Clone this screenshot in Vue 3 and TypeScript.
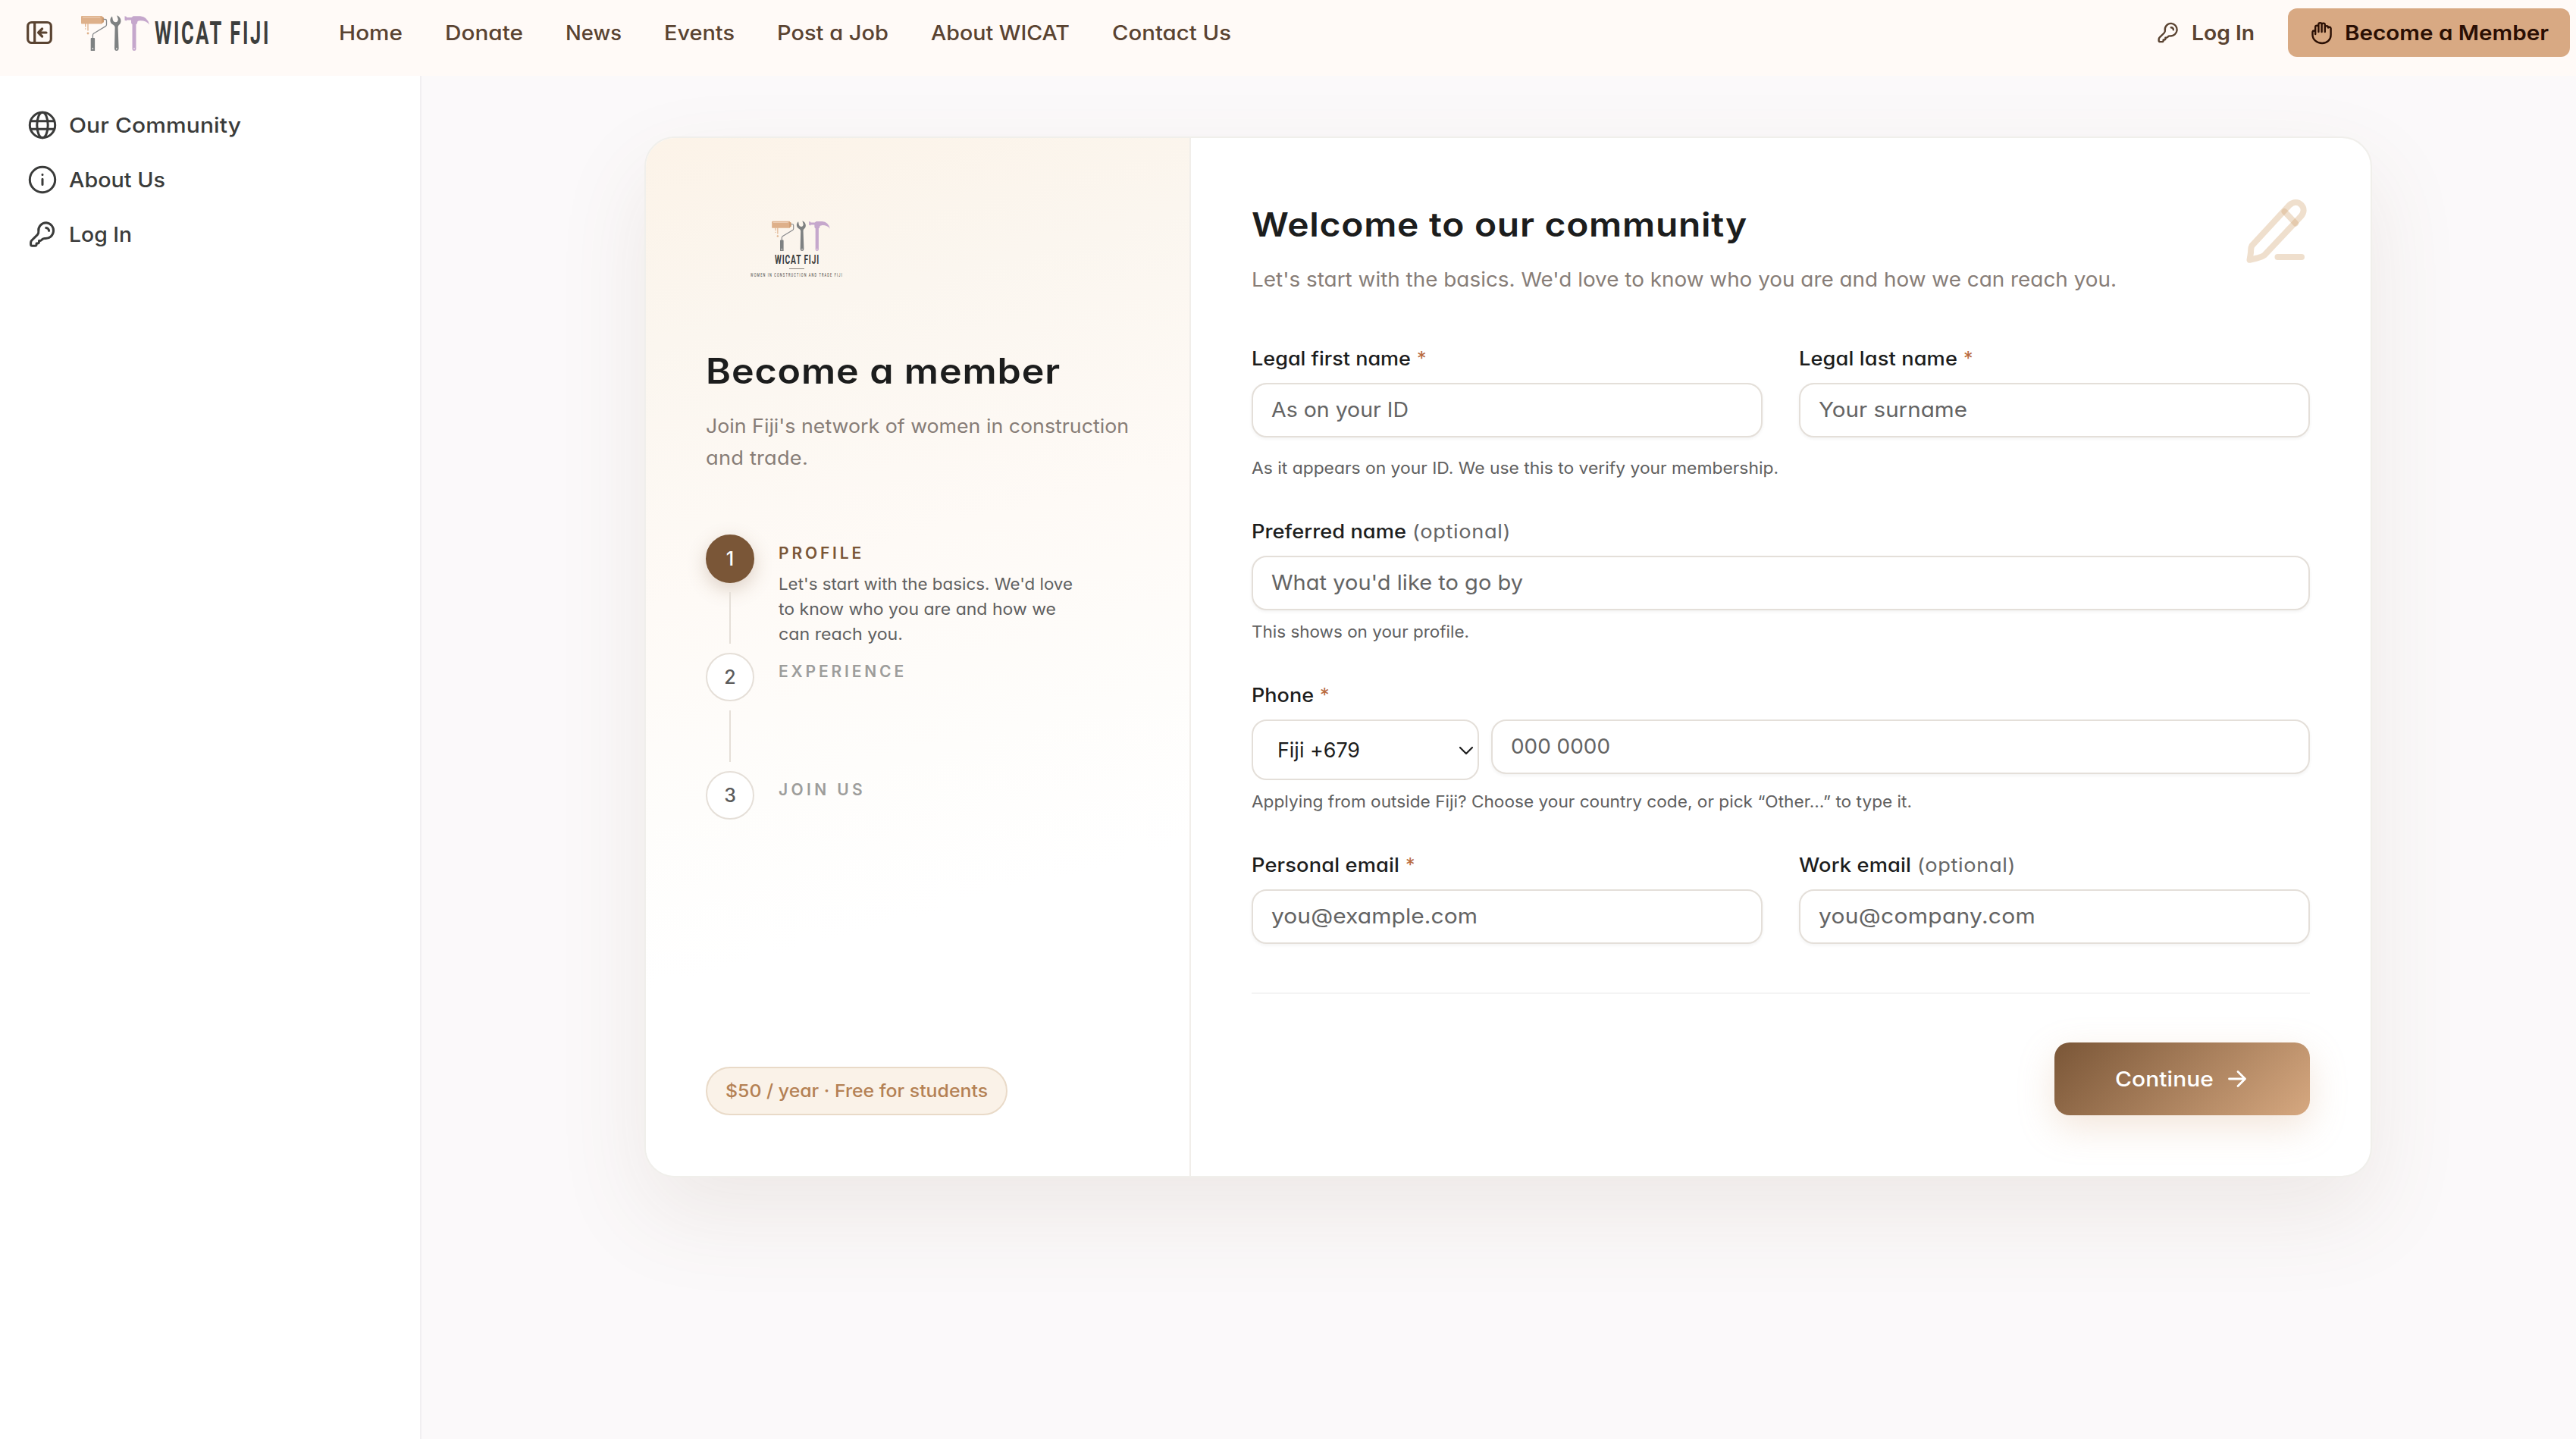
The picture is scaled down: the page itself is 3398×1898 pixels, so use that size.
<script setup lang="ts">
import type { Directive } from 'vue'

interface Line {
  text: string
  width: number
}

// Makes a line of text occupy the given width: the glyphs are widened up to
// a limit, and any remainder goes into tracking. "narrow" condenses the
// glyphs for the wordmark, "track" leaves them as they are.
const MAX_STRETCH = 1.09
const FIXED: Record<string, number> = { narrow: 0.6, track: 1 }

const vFit: Directive<HTMLElement, number> = {
  mounted(el, binding) {
    const target = binding.value
    const count = (el.textContent ?? '').length
    const natural = el.getBoundingClientRect().width
    const stretch = binding.arg ? FIXED[binding.arg] : Math.min(MAX_STRETCH, target / natural)
    const layout = target / stretch
    el.style.letterSpacing = `${(layout - natural) / count}px`
    el.style.transform = `scaleX(${stretch})`
    el.style.marginRight = `${target - layout}px`
  },
}

const nav: Line[] = [
  { text: 'Home', width: 84 },
  { text: 'Donate', width: 103 },
  { text: 'News', width: 74 },
  { text: 'Events', width: 93 },
  { text: 'Post a Job', width: 147 },
  { text: 'About WICAT', width: 183 },
  { text: 'Contact Us', width: 157 },
]

const side = [
  { icon: 'globe', text: 'Our Community', width: 227 },
  { icon: 'info', text: 'About Us', width: 127 },
  { icon: 'key', text: 'Log In', width: 83 },
]

const steps: { title: Line; lines: Line[] }[] = [
  {
    title: { text: 'PROFILE', width: 113 },
    lines: [
      { text: "Let's start with the basics. We'd love", width: 388 },
      { text: 'to know who you are and how we', width: 366 },
      { text: 'can reach you.', width: 164 },
    ],
  },
  { title: { text: 'EXPERIENCE', width: 169 }, lines: [] },
  { title: { text: 'JOIN US', width: 115 }, lines: [] },
]
</script>

<template>
  <svg class="defs" width="0" height="0" aria-hidden="true">
    <symbol id="tools" viewBox="0 0 90 47">
      <rect x="0" y="1" width="28" height="10.6" rx="1" fill="#deb08a" />
      <path d="M27 1.5l3 1.7v6l-3 1.8z" fill="#cf9d73" />
      <path d="M2 2.8h23" stroke="#ecd0b8" stroke-width="1.2" />
      <path d="M5.7 11v4.5M9 11v9.5" stroke="#deb08a" stroke-width="1.3" />
      <circle cx="5.7" cy="18" r=".8" fill="#deb08a" />
      <circle cx="9" cy="24" r="1.4" fill="#deb08a" />
      <path d="M29.5 5.5h2.2q1.8 0 1.8 1.8v5.2q0 1.4-1.2 2.1L16.8 24q-1.4 1-1.4 2.4V31" fill="none" stroke="#85878a" stroke-width="1.3" />
      <path fill-rule="evenodd" d="M12.7 31q0-1 1-1h3.4q1 0 1 1v16h-5.4zM14.6 43.5v1.6h1.5v-1.6z" fill="#7e8182" />
      <path fill-rule="evenodd" d="M41 1.6C37.3 4.2 37.4 10.4 42 12.6q2.600 1.200 2.600 3.500L44 44q.2 3 2.800 3t2.800-3l-1-28q0-2.200 1.800-3.600C54 9.400 53 2.500 47.200.2L48.800 5.600q-.3 3.500-3.200 3.700-3.300-.2-3.800-3.200zM46.100 43.600h1.400v1.600h-1.400z" fill="#7e8182" />
      <path fill-rule="evenodd" d="M57.500 1.300l2.500.7v1h6.500l2.200-1.700H78Q87.500 2 90 12.500 86 6.900 77.500 7.200q-3.300 0-3.300 2.300 0 2-1.700 2.500V45q-.2 2-2.500 2t-2.500-2V12Q66 11.500 66 9.500V6.500h-6v1l-2.500-.7zM69.300 43.500h1.400v1.600h-1.400z" fill="#c5a7cc" />
    </symbol>
    <symbol id="key" viewBox="0 0 40 40">
      <path d="M25 4.800a10.200 10.200 0 0 0-10.200 11.600c.2 1.700-.2 3-1.400 4.200L5.900 28A4.200 4.200 0 0 0 4.600 31v2.200c0 1.100.9 2 2 2h3.600c1.100 0 1.900-.9 1.900-2v-1.300h1.500c1 0 1.900-.8 1.900-1.900v-1.600h1.700c.5 0 1-.2 1.400-.6l1.200-1.200c.9-.9 2.100-1.200 3.600-1.100A10.200 10.200 0 1 0 25 4.800z" />
      <path d="M24.800 11.500a4 4 0 0 1 3.800 3.900" />
    </symbol>
    <symbol id="globe" viewBox="0 0 40 40">
      <circle cx="20" cy="20" r="16.700" />
      <ellipse cx="20" cy="20" rx="7.200" ry="16.700" />
      <path d="M4.500 14.700h31M4.500 25.300h31" />
    </symbol>
    <symbol id="info" viewBox="0 0 40 40">
      <circle cx="20" cy="20" r="16.700" />
      <path d="M20 19.200v7.400M20 13.200v.4" />
    </symbol>
  </svg>

  <div class="page">
    <header class="topbar">
      <svg class="toggle" viewBox="0 0 40 40">
        <rect x="4.700" y="6.500" width="30.600" height="27" rx="5" />
        <path d="M13.700 6.500v27M29 20H19M23.600 15l-5 5 5 5" />
      </svg>
      <div class="brand">
        <svg><use href="#tools" /></svg>
        <span v-fit:narrow="153">WICAT FIJI</span>
      </div>
      <nav class="nav">
        <a v-for="item in nav" :key="item.text" v-fit="item.width">{{ item.text }}</a>
      </nav>
      <a class="login">
        <svg><use href="#key" /></svg>
        <span v-fit="83">Log In</span>
      </a>
      <a class="join">
        <svg viewBox="0 0 32 32">
          <path d="M8.200 18V8.700a2.100 2.100 0 0 1 4.200 0V15M12.400 15V5.200a2.100 2.100 0 0 1 4.200 0V15M16.600 15V5.700a2.100 2.100 0 0 1 4.200 0V15M20.800 15V9.200a2.100 2.100 0 0 1 4.200 0M25 9.500a2 2 0 0 1 3.600 1v8.600c0 6.400-4.900 10.900-11.500 10.900S4.500 25.200 4.500 19v-4a1.900 1.900 0 0 1 3.700 0" />
        </svg>
        <span v-fit="269">Become a Member</span>
      </a>
    </header>

    <div class="body">
      <aside class="sidebar">
        <a v-for="item in side" :key="item.text">
          <svg><use :href="'#' + item.icon" /></svg>
          <span v-fit="item.width">{{ item.text }}</span>
        </a>
      </aside>

      <main class="main">
        <section class="card">
          <div class="intro">
            <div class="crest">
              <svg class="crest-tools"><use href="#tools" /></svg>
              <span v-fit:narrow="59" class="crest-name">WICAT FIJI</span>
              <i></i>
              <span v-fit:narrow="122" class="crest-tag">WOMEN IN CONSTRUCTION AND TRADE FIJI</span>
            </div>
            <h2><span v-fit="468">Become a member</span></h2>
            <p class="lead">
              <span v-fit="558">Join Fiji's network of women in construction</span>
              <span v-fit="135">and trade.</span>
            </p>
            <ol class="steps">
              <li v-for="(step, i) in steps" :key="i" :class="{ active: i === 0 }">
                <div class="rail">
                  <b>{{ i + 1 }}</b>
                  <i v-if="i < steps.length - 1"></i>
                </div>
                <div class="step-text">
                  <h3><span v-fit:track="step.title.width">{{ step.title.text }}</span></h3>
                  <p v-if="step.lines.length">
                    <span v-for="line in step.lines" :key="line.text" v-fit="line.width">{{ line.text }}</span>
                  </p>
                </div>
              </li>
            </ol>
            <div class="pill"><span v-fit="346">$50 / year · Free for students</span></div>
          </div>

          <form class="form">
            <div class="head">
              <div>
                <h1><span v-fit="654">Welcome to our community</span></h1>
                <p><span v-fit="1141">Let's start with the basics. We'd love to know who you are and how we can reach you.</span></p>
              </div>
              <svg class="pencil" viewBox="0 0 96 96">
                <path d="M19.500 66L62 20l7-7.500c5.500-5 11.500-4.500 15.500-.5s4.500 10-.5 15.500L76.500 35.500 36 78.500c-3 2.500-6 3-10 4l-9.500 2.300 1.500-9.500c.3-3.500-.3-6 1.500-9.300z" />
                <path d="M62.500 21l14.500 15.500" />
                <path d="M53.500 81h31.500" />
              </svg>
            </div>

            <div class="field">
              <div class="pair">
                <div>
                  <label><span v-fit="210">Legal first name</span><em>*</em></label>
                  <div class="input"><span v-fit="181">As on your ID</span></div>
                </div>
                <div>
                  <label><span v-fit="209">Legal last name</span><em>*</em></label>
                  <div class="input"><span v-fit="196">Your surname</span></div>
                </div>
              </div>
              <p class="hint far"><span v-fit="695">As it appears on your ID. We use this to verify your membership.</span></p>
            </div>

            <div class="field">
              <label><span v-fit="204">Preferred name</span><small v-fit="130">(optional)</small></label>
              <div class="input"><span v-fit="332">What you'd like to go by</span></div>
              <p class="hint"><span v-fit="287">This shows on your profile.</span></p>
            </div>

            <div class="field">
              <label><span v-fit="82">Phone</span><em>*</em></label>
              <div class="phone">
                <div class="select">
                  <span v-fit="109">Fiji +679</span>
                  <svg viewBox="0 0 20 12"><path d="M2 2l8 8 8-8" /></svg>
                </div>
                <div class="input"><span v-fit="131">000 0000</span></div>
              </div>
              <p class="hint"><span v-fit="871">Applying from outside Fiji? Choose your country code, or pick “Other…” to type it.</span></p>
            </div>

            <div class="pair">
              <div>
                <label><span v-fit="195">Personal email</span><em>*</em></label>
                <div class="input"><span v-fit="272">you@example.com</span></div>
              </div>
              <div>
                <label><span v-fit="148">Work email</span><small v-fit="130">(optional)</small></label>
                <div class="input"><span v-fit="286">you@company.com</span></div>
              </div>
            </div>

            <div class="actions">
              <button type="button">
                <span v-fit="130">Continue</span>
                <svg viewBox="0 0 28 28"><path d="M3.500 14h21M15 4.500l9.500 9.500-9.500 9.500" /></svg>
              </button>
            </div>
          </form>
        </section>
      </main>
    </div>
  </div>
</template>

<style>
body {
  margin: 0;
  overflow: hidden;
}
</style>

<style scoped>
.defs {
  position: absolute;
}
.page {
  width: 3398px;
  height: 1898px;
  display: flex;
  flex-direction: column;
  font-family: Inter, 'Noto Sans', sans-serif;
  font-feature-settings: 'cv11', 'calt' 0;
  font-size: 27.500px;
  color: #1c1d1d;
  background: #fbf9fa;
}
.page * {
  box-sizing: border-box;
}
h1, h2, h3, p, ol {
  margin: 0;
  padding: 0;
}
span, small, .nav a {
  display: inline-block;
  white-space: nowrap;
  transform-origin: left center;
}
svg {
  fill: none;
  stroke: currentColor;
  stroke-linecap: round;
  stroke-linejoin: round;
  flex: none;
}
symbol#tools, symbol#tools * {
  stroke-linecap: butt;
}
symbol#tools > [fill]:not([stroke]) {
  stroke: none;
}

.topbar {
  height: 100px;
  padding: 0 8px 14px 32px;
  display: flex;
  align-items: center;
  background: #fffaf7;
  color: #5a4331;
}
.toggle {
  width: 40px;
  height: 40px;
  stroke-width: 3.200;
}
.brand {
  width: 248px;
  height: 47px;
  margin-left: 35px;
  display: flex;
  align-items: center;
  gap: 7px;
}
.brand svg {
  width: 90px;
  height: 47px;
}
.brand span {
  font-family: Roboto, sans-serif;
  font-size: 42.500px;
  font-weight: 700;
  line-height: 47px;
  color: #3d3e3d;
}
.nav {
  display: flex;
  gap: 56px;
  margin-left: 92px;
  padding-bottom: 1px;
  font-weight: 500;
  line-height: 42px;
}
.login, .join {
  display: flex;
  align-items: center;
  font-weight: 600;
}
.login {
  margin-left: auto;
}
.login svg {
  width: 32px;
  height: 32px;
  stroke-width: 3;
  margin-right: 15px;
}
.join {
  width: 372px;
  height: 64px;
  margin-left: 44px;
  padding-left: 28px;
  border-radius: 12px;
  background: #d8a983;
  color: #2a0f04;
}
.join svg {
  width: 32px;
  height: 32px;
  stroke-width: 2.400;
  margin-right: 15px;
}

.body {
  flex: 1;
  display: flex;
}
.sidebar {
  width: 556px;
  padding: 29px 0 0 36px;
  border-right: 2px solid #f1eff1;
  background: #fff;
  color: #3a3b3a;
}
.sidebar a {
  height: 72px;
  display: flex;
  align-items: center;
  gap: 15px;
  font-weight: 500;
}
.sidebar svg {
  width: 40px;
  height: 40px;
  stroke-width: 3;
}
.main {
  flex: 1;
  padding: 80px 0 0 294px;
}

.card {
  width: 2279px;
  height: 1373px;
  display: flex;
  border: 2px solid #f0efeb;
  border-radius: 40px;
  background: #fff;
  background-clip: padding-box;
  box-shadow: 0 48px 120px rgba(122, 86, 56, 0.1);
}
.intro {
  width: 719px;
  padding: 80px 78px 80px 79px;
  display: flex;
  flex-direction: column;
  border-right: 2px solid #f1eeea;
  border-radius: 38px 0 0 38px;
  background: linear-gradient(165deg, #fcf3e8 0%, #fbf6ef 18%, #fefaf6 40%, #fefdfb 58%, #fff 72%);
}
.crest {
  width: 240px;
  height: 160px;
  padding-top: 29px;
  display: flex;
  flex-direction: column;
  align-items: center;
  font-family: Roboto, sans-serif;
  color: #3d3e3d;
}
.crest-tools {
  width: 77px;
  height: 40px;
  margin-left: 11px;
}
.crest-name {
  margin-top: 3px;
  font-size: 17px;
  font-weight: 700;
  line-height: 16px;
}
.crest i {
  width: 20px;
  height: 1px;
  margin-top: 4px;
  background: #8b8680;
}
.crest-tag {
  margin-top: 4px;
  font-size: 6.500px;
  line-height: 9px;
}
h2 {
  margin-top: 37px;
  font-size: 46px;
  font-weight: 600;
  line-height: 60px;
}
.lead {
  margin-top: 22px;
  display: flex;
  flex-direction: column;
  align-items: flex-start;
  font-size: 25px;
  line-height: 42px;
  color: #877d77;
}
.steps {
  margin-top: 80px;
  list-style: none;
}
.steps li {
  height: 156px;
  display: flex;
  gap: 32px;
}
.rail {
  width: 64px;
  display: flex;
  flex-direction: column;
  align-items: center;
  gap: 12px;
}
.rail b {
  width: 64px;
  height: 64px;
  border: 2px solid #e5dfd8;
  border-radius: 50%;
  background: #fff;
  font-size: 25px;
  font-weight: 500;
  line-height: 60px;
  text-align: center;
  color: #5b5b5b;
}
.active .rail b {
  border-color: #7a5637;
  background: #7a5637;
  color: #fff;
  box-shadow: 0 8px 24px rgba(122, 86, 55, 0.25);
}
.rail i {
  width: 2px;
  height: 68px;
  background: #e5dfd8;
}
.step-text {
  padding-top: 9px;
}
h3 {
  font-size: 21px;
  font-weight: 600;
  line-height: 32px;
  color: #9d9d9b;
}
.active h3 {
  color: #7a5637;
}
.step-text p {
  margin-top: 8px;
  display: flex;
  flex-direction: column;
  align-items: flex-start;
  font-size: 21.500px;
  line-height: 33px;
  color: #606060;
}
.pill {
  width: 398px;
  height: 64px;
  margin-top: auto;
  padding-left: 24px;
  border: 2px solid #e9dac8;
  border-radius: 32px;
  background: #faf2e8;
  font-size: 23.500px;
  font-weight: 500;
  line-height: 60px;
  color: #b48154;
}

.form {
  flex: 1;
  padding: 80px;
  display: flex;
  flex-direction: column;
  gap: 48px;
}
.head {
  display: flex;
  justify-content: space-between;
  margin-bottom: 14px;
}
h1 {
  font-size: 44px;
  font-weight: 600;
  line-height: 68px;
}
.head p {
  margin-top: 17px;
  font-size: 26px;
  line-height: 44px;
  color: #877d77;
}
.pencil {
  width: 96px;
  height: 96px;
  margin-top: -4px;
  stroke: rgba(212, 165, 116, 0.36);
  stroke-width: 8;
}
.pair {
  display: grid;
  grid-template-columns: 1fr 1fr;
  gap: 48px;
}
label {
  height: 40px;
  margin-bottom: 12px;
  display: flex;
  gap: 8px;
  font-size: 25px;
  font-weight: 500;
  line-height: 40px;
}
label em {
  font-style: normal;
  font-weight: 400;
  color: #b96b41;
}
label small {
  font-size: 25px;
  font-weight: 400;
  color: #666;
}
.input, .select {
  height: 72px;
  padding-left: 24px;
  border: 2px solid #e4dfd9;
  border-radius: 20px;
  background: #fff;
  line-height: 67px;
  color: #646464;
}
.input {
  box-shadow: 0 2px 4px rgba(0, 0, 0, 0.05);
}
.hint {
  margin-top: 12px;
  font-size: 21.500px;
  line-height: 32px;
  color: #606060;
}
.hint.far {
  margin-top: 24px;
}
.phone {
  display: flex;
  align-items: flex-start;
  gap: 16px;
}
.phone .input {
  flex: 1;
}
.select {
  width: 300px;
  height: 80px;
  padding: 1px 5px 0 32px;
  display: flex;
  align-items: center;
  justify-content: space-between;
  color: #1c1d1d;
}
.select svg {
  width: 20px;
  height: 12px;
  stroke-width: 2.200;
}
.actions {
  margin-top: 16px;
  padding-top: 64px;
  border-top: 2px solid #f4f4f4;
  display: flex;
  justify-content: flex-end;
}
button {
  width: 337px;
  height: 96px;
  padding: 0 0 0 80px;
  display: flex;
  align-items: center;
  gap: 17px;
  border: 0;
  border-radius: 20px;
  background: linear-gradient(135deg, #7a5637, #d6a880);
  box-shadow: 0 16px 48px rgba(212, 165, 126, 0.28);
  font: inherit;
  font-weight: 500;
  color: #fff;
}
button svg {
  width: 28px;
  height: 28px;
  stroke-width: 2.800;
}
</style>
